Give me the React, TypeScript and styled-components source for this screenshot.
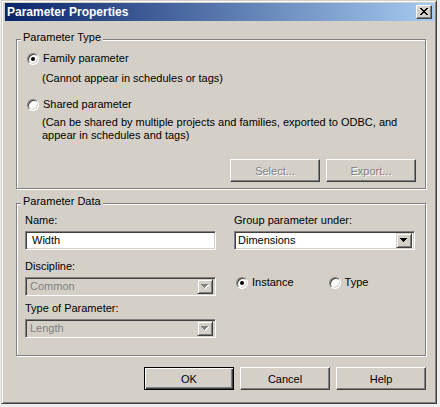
import styled, { createGlobalStyle } from "styled-components";

const GlobalStyle = createGlobalStyle`
  html, body {
    margin: 0;
    padding: 0;
    background: #eeeeee;
  }
  body {
    font-family: "Liberation Sans", Arial, sans-serif;
    font-size: 11px;
    color: #000;
  }
`;

const face = "#d4d0c8";

const Window = styled.div`
  box-sizing: border-box;
  width: 436px;
  height: 404px;
  margin-left: 1px;
  padding: 2px 2px 0 3px;
  background: ${face};
  border: 1px solid;
  border-color: ${face} #404040 #404040 ${face};
  box-shadow: inset 1px 1px #fff, inset -1px -1px #808080;
  display: flex;
  flex-direction: column;
`;

const TitleBar = styled.div`
  height: 18px;
  padding: 0 2px 0 2px;
  display: flex;
  align-items: center;
  justify-content: space-between;
  background: linear-gradient(to right, #0a246a, #a6caf0);
`;

const Title = styled.span`
  color: #fff;
  font-weight: bold;
  font-size: 12px;
  line-height: 14px;
`;

const CloseButton = styled.div`
  box-sizing: border-box;
  width: 16px;
  height: 14px;
  background: ${face};
  border: 1px solid;
  border-color: #fff #404040 #404040 #fff;
  box-shadow: inset -1px -1px #808080;
  display: flex;
  align-items: center;
  justify-content: center;
  padding: 0 1px 1px 0;
`;

const Body = styled.div`
  padding: 18px 8px 0 11px;
  display: flex;
  flex-direction: column;
`;

const GroupBox = styled.div<{ $top?: number; $pad: string }>`
  position: relative;
  margin-top: ${({ $top }) => $top ?? 0}px;
  padding: ${({ $pad }) => $pad};
  border: 1px solid #808080;
  box-shadow: inset 1px 1px #fff, 1px 1px #fff;
  display: flex;
  flex-direction: column;
`;

const Legend = styled.span`
  position: absolute;
  top: -9px;
  left: 4px;
  padding: 0 2px;
  line-height: 13px;
  background: ${face};
`;

const RadioRow = styled.label<{ $top?: number; $indent?: number }>`
  display: flex;
  align-items: center;
  gap: 4px;
  height: 13px;
  line-height: 13px;
  margin-top: ${({ $top }) => $top ?? 0}px;
  margin-left: ${({ $indent }) => $indent ?? 0}px;
`;

const RadioDot = styled.span<{ $checked?: boolean }>`
  position: relative;
  box-sizing: border-box;
  width: 12px;
  height: 12px;
  border-radius: 50%;
  background: #fff;
  border: 1px solid;
  border-color: #808080 #fff #fff #808080;
  box-shadow: inset 1px 1px #404040, inset -1px -1px ${face};
  flex-shrink: 0;

  &::after {
    content: "";
    display: ${({ $checked }) => ($checked ? "block" : "none")};
    position: absolute;
    left: 3px;
    top: 3px;
    width: 4px;
    height: 4px;
    border-radius: 50%;
    background: #000;
  }
`;

const Note = styled.div<{ $top: number }>`
  margin-top: ${({ $top }) => $top}px;
  margin-left: 15px;
  line-height: 13px;
`;

const ButtonRow = styled.div<{ $top: number }>`
  display: flex;
  justify-content: flex-end;
  gap: 6px;
  margin-top: ${({ $top }) => $top}px;
`;

const Button = styled.button<{ $default?: boolean }>`
  box-sizing: border-box;
  width: 90px;
  height: 23px;
  padding: 0;
  font: inherit;
  font-size: 11px;
  color: ${({ disabled }) => (disabled ? "#808080" : "#000")};
  text-shadow: ${({ disabled }) => (disabled ? "1px 1px #fff" : "none")};
  background: ${face};
  border: 1px solid;
  border-color: ${({ $default }) =>
    $default ? "#000" : "#fff #404040 #404040 #fff"};
  box-shadow: ${({ $default }) =>
    $default
      ? "inset 1px 1px #fff, inset -1px -1px #404040, inset -2px -2px #808080"
      : "inset -1px -1px #808080"};
`;

const DataGrid = styled.div`
  display: grid;
  grid-template-columns: 191px 181px;
  column-gap: 18px;
`;

const Column = styled.div`
  display: flex;
  flex-direction: column;
`;

const FieldLabel = styled.div<{ $top?: number }>`
  margin-top: ${({ $top }) => $top ?? 0}px;
  margin-bottom: 4px;
  line-height: 13px;
`;

const Sunken = styled.div<{ $disabled?: boolean }>`
  box-sizing: border-box;
  height: 19px;
  display: flex;
  align-items: center;
  background: ${({ $disabled }) => ($disabled ? face : "#fff")};
  color: ${({ $disabled }) => ($disabled ? "#808080" : "#000")};
  border: 1px solid;
  border-color: #808080 #fff #fff #808080;
  box-shadow: inset 1px 1px #404040, inset -1px -1px ${face};
  padding: 2px;
`;

const FieldText = styled.span<{ $pad: number }>`
  flex: 1;
  padding-left: ${({ $pad }) => $pad}px;
  line-height: 13px;
  white-space: nowrap;
  overflow: hidden;
`;

const DropButton = styled.span`
  box-sizing: border-box;
  width: 16px;
  height: 15px;
  flex-shrink: 0;
  background: ${face};
  border: 1px solid;
  border-color: ${face} #404040 #404040 ${face};
  box-shadow: inset 1px 1px #fff, inset -1px -1px #808080;
  display: flex;
  align-items: center;
  justify-content: center;
`;

const RadioPair = styled.div`
  display: flex;
  margin-top: 26px;
`;

function CloseGlyph() {
  return (
    <svg width="8" height="7" viewBox="0 0 8 7" shapeRendering="crispEdges">
      <path
        d="M0 0h2v1h-2zM6 0h2v1h-2zM1 1h2v1h-2zM5 1h2v1h-2zM2 2h4v1h-4zM3 3h2v1h-2zM2 4h4v1h-4zM1 5h2v1h-2zM5 5h2v1h-2zM0 6h2v1h-2zM6 6h2v1h-2z"
        fill="#000"
      />
    </svg>
  );
}

function Arrow({ disabled }: { disabled?: boolean }) {
  const d = "M0 0h7v1h-1v1h-1v1h-1v1h-1v-1h-1v-1h-1v-1h-1z";
  return (
    <svg width="8" height="5" viewBox="0 0 8 5" shapeRendering="crispEdges">
      {disabled && <path d={d} fill="#fff" transform="translate(1 1)" />}
      <path d={d} fill={disabled ? "#808080" : "#000"} />
    </svg>
  );
}

function Combo({ value, disabled }: { value: string; disabled?: boolean }) {
  return (
    <Sunken $disabled={disabled}>
      <FieldText $pad={disabled ? 2 : 1}>{value}</FieldText>
      <DropButton>
        <Arrow disabled={disabled} />
      </DropButton>
    </Sunken>
  );
}

export default function App() {
  return (
    <>
      <GlobalStyle />
      <Window>
        <TitleBar>
          <Title>Parameter Properties</Title>
          <CloseButton>
            <CloseGlyph />
          </CloseButton>
        </TitleBar>
        <Body>
          <GroupBox $pad="12px 9px 6px 10px">
            <Legend>Parameter Type</Legend>
            <RadioRow>
              <RadioDot $checked />
              Family parameter
            </RadioRow>
            <Note $top={7}>(Cannot appear in schedules or tags)</Note>
            <RadioRow $top={13}>
              <RadioDot />
              Shared parameter
            </RadioRow>
            <Note $top={5}>
              (Can be shared by multiple projects and families, exported to ODBC, and
              <br />
              appear in schedules and tags)
            </Note>
            <ButtonRow $top={17}>
              <Button disabled>Select...</Button>
              <Button disabled>Export...</Button>
            </ButtonRow>
          </GroupBox>

          <GroupBox $top={14} $pad="10px 8px 17px 8px">
            <Legend>Parameter Data</Legend>
            <DataGrid>
              <Column>
                <FieldLabel>Name:</FieldLabel>
                <Sunken>
                  <FieldText $pad={4}>Width</FieldText>
                </Sunken>
                <FieldLabel $top={10}>Discipline:</FieldLabel>
                <Combo value="Common" disabled />
                <FieldLabel $top={6}>Type of Parameter:</FieldLabel>
                <Combo value="Length" disabled />
              </Column>
              <Column>
                <FieldLabel>Group parameter under:</FieldLabel>
                <Combo value="Dimensions" />
                <RadioPair>
                  <RadioRow $indent={2}>
                    <RadioDot $checked />
                    Instance
                  </RadioRow>
                  <RadioRow $indent={35}>
                    <RadioDot />
                    Type
                  </RadioRow>
                </RadioPair>
              </Column>
            </DataGrid>
          </GroupBox>

          <ButtonRow $top={11}>
            <Button $default>OK</Button>
            <Button>Cancel</Button>
            <Button>Help</Button>
          </ButtonRow>
        </Body>
      </Window>
    </>
  );
}
